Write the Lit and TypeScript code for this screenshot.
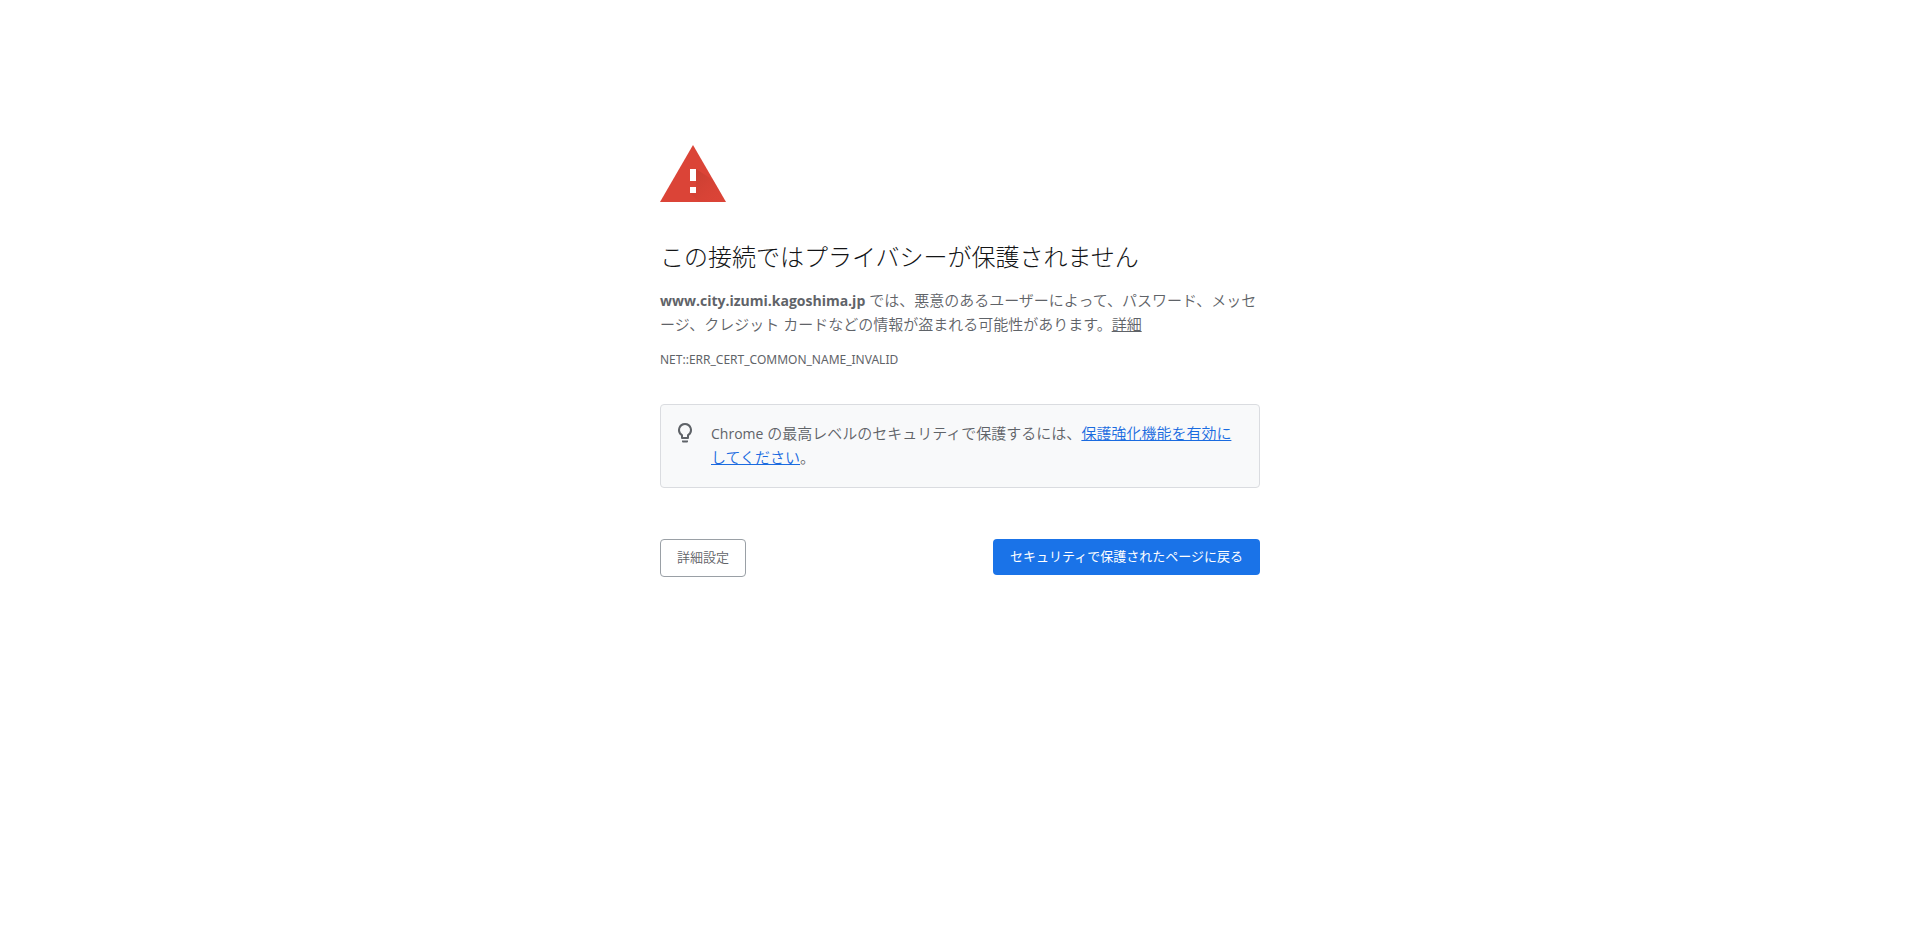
import { LitElement, html, css } from "lit";
import { customElement } from "lit/decorators.js";

@customElement("app-root")
export class AppRoot extends LitElement {
  static styles = css`
    :host {
      display: block;
      box-sizing: border-box;
      min-height: 100vh;
      padding: 14vh 24px 24px;
      background: #fff;
      color: #5f6368;
      font-family: "Open Sans", "Noto Sans CJK JP", sans-serif;
      font-size: 15px;
      font-weight: 350;
      line-height: 24px;
      line-break: loose;
    }
    .wrapper {
      max-width: 600px;
      margin: 0 auto;
    }
    .warning {
      display: block;
      width: 72px;
      height: 72px;
      margin-bottom: 40px;
    }
    h1 {
      margin: 0 0 16px;
      color: #131416;
      font-size: 24px;
      font-weight: 300;
      line-height: 30px;
    }
    p {
      margin: 0;
    }
    .latin {
      font-size: 14px;
      line-height: 16px;
    }
    span.latin {
      font-weight: 400;
    }
    a {
      text-decoration-skip-ink: none;
    }
    .details {
      color: inherit;
    }
    .code {
      margin-top: 12px;
      font-family: "Noto Sans", sans-serif;
      font-size: 12px;
      font-weight: 400;
    }
    .tip {
      display: flex;
      gap: 14px;
      margin: 32px 0 51px;
      padding: 16px 16px 18px 12px;
      border: 1px solid #dadce0;
      border-radius: 4px;
      background: #f8f9fa;
    }
    .bulb {
      flex: none;
      width: 24px;
      height: 24px;
      fill: #5f6368;
    }
    .tip a {
      color: #1a6be0;
    }
    .actions {
      display: flex;
      flex-wrap: wrap;
      justify-content: space-between;
      align-items: flex-start;
      gap: 12px;
    }
    button {
      padding: 7px 16px 9px;
      border: 0;
      border-radius: 4px;
      font: inherit;
      font-size: 13px;
      line-height: 20px;
      cursor: pointer;
    }
    .secondary {
      border: 1px solid #9aa0a6;
      background: #fff;
      color: #5f6368;
    }
    .primary {
      padding-inline: 17px;
      background: #1a73e8;
      color: #fff;
      font-weight: 400;
    }
  `;

  render() {
    return html`
      <main class="wrapper" lang="ja">
        <svg class="warning" viewBox="0 0 72 72" aria-hidden="true">
          <defs>
            <linearGradient id="shade" x1="0" y1="0" x2="1" y2="1">
              <stop offset="0" stop-color="#b93a2c" stop-opacity=".7" />
              <stop offset="1" stop-color="#db4437" stop-opacity="0" />
            </linearGradient>
          </defs>
          <path fill="#db4437" d="M0 72 33 15l33 57z" />
          <path fill="url(#shade)" d="M36 39l17 11 13 22H39l-9-9 6-6z" />
          <path fill="#fff" d="M30 39h6v12h-6zM30 57h6v6h-6z" />
        </svg>
        <h1>この接続ではプライバシーが保護されません</h1>
        <p><strong class="latin">www.city.izumi.kagoshima.jp</strong> では、悪意のあるユーザーによって、パスワード、メッセージ、クレジット カードなどの情報が盗まれる可能性があります。<a class="details" href="#">詳細</a></p>
        <p class="code">NET::ERR_CERT_COMMON_NAME_INVALID</p>
        <section class="tip">
          <svg class="bulb" viewBox="0 0 24 24" aria-hidden="true">
            <path d="M9 19.500h6v1a1 1 0 0 1-1 1h-4a1 1 0 0 1-1-1zM12 2a7 7 0 0 0-4 12.740V17a1 1 0 0 0 1 1h6a1 1 0 0 0 1-1v-2.260A7 7 0 0 0 12 2zm2.850 11.100-.85.6V16h-4v-2.300l-.85-.6A5 5 0 1 1 14.850 13.100z" />
          </svg>
          <p><span class="latin">Chrome</span> の最高レベルのセキュリティで保護するには、<a href="#">保護強化機能を有効にしてください</a>。</p>
        </section>
        <div class="actions">
          <button class="secondary" type="button">詳細設定</button>
          <button class="primary" type="button">セキュリティで保護されたページに戻る</button>
        </div>
      </main>
    `;
  }
}
